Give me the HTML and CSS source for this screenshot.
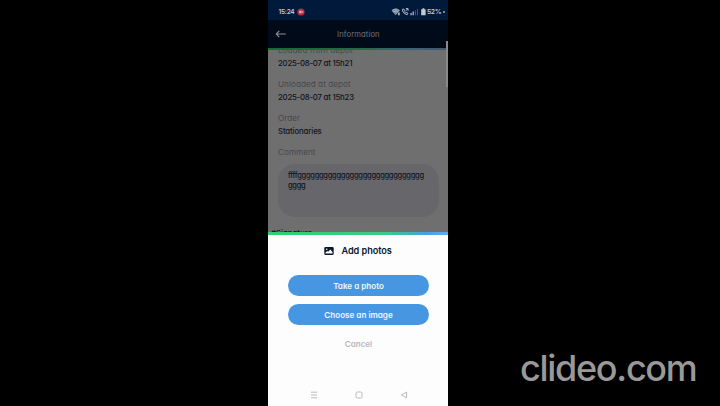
FILE: index.html
```html
<!DOCTYPE html>
<html lang="en">
<head>
<meta charset="utf-8">
<title>Information</title>
<link rel="stylesheet" href="styles.css">
</head>
<body>
<div class="phone">
  <div class="status">
    <span class="time">15:24</span>
    <svg class="rec" viewBox="0 0 8 8"><circle cx="4" cy="4" r="3.6" fill="#b82b42"/><path d="M2.2 2.7h2.5v2.6H2.2zM5 3.6l1.2-.7v2.2L5 4.5z" fill="#d9aab8"/></svg>
    <svg class="signals" viewBox="0 0 36 10">
      <path d="M.5 3.6Q4.7 0 8.9 3.6L4.7 8.2z" fill="#7f8ea1"/>
      <path d="M1 3.5q3.7-3.1 7.4 0M2.2 5q2.5-2 5 0" fill="none" stroke="#b4bdc8" stroke-width=".8"/>
      <path d="M7 5.6h1.8v2.6H7z" fill="#a5b0be"/>
      <g fill="none" stroke="#b4bdc8" stroke-width="1"><path d="M11.4 2.3c0 2.8 1.7 4.5 4.8 5.4l.8-1.4-1.5-.9-.9.6-1.5-1.6.6-.9-.8-1.4z"/><path d="M14.6 3.9l2.4-2.2M14.8 1.6h2.3v2"/></g>
      <path d="M19.4 6h1.4v2.2h-1.4zM21.5 4.6h1.4v3.6h-1.4z" fill="#a5b0be"/>
      <path d="M23.9 3.2h1v5h-1zM26 2h1v6.2h-1z" fill="#425571"/>
      <path d="M31.5 1.3h1.8v1h1.3v6h-4.4v-6h1.3z" fill="#c3cad3"/>
    </svg>
    <span class="percent">52%</span>
    <span class="dot"></span>
  </div>
  <div class="header">
    <svg class="back" viewBox="0 0 12 10"><path d="M10.8 5H1.2M4.3 1.8L1.2 5l3.1 3.2" fill="none" stroke="#8c8f96" stroke-width="1.1"/></svg>
    <span class="heading">Information</span>
  </div>
  <div class="rule rule-dim"></div>
  <div class="content">
    <div class="label l-load">Loaded from depot</div>
    <div class="value v-date">2025-08-07 at 15h21</div>
    <div class="label l-unload">Unloaded at depot</div>
    <div class="value v-date2">2025-08-07 at 15h23</div>
    <div class="label l-order">Order</div>
    <div class="value v-stat">Stationaries</div>
    <div class="label l-comment">Comment</div>
    <div class="comment">ffffggggggggggggggggggggggggggggg<br>gggg</div>
    <div class="value signed">#Signature</div>
  </div>
  <div class="scrollbar"></div>
  <div class="rule"></div>
  <div class="sheet">
    <div class="title">
      <svg class="photo" viewBox="0 0 10 8"><rect x=".3" y=".1" width="9.4" height="7.8" rx="1.1" fill="#0b1730"/><path d="M1.5 6.6V5.4L3.2 3.9l1 .9 2-2.2 2.3 2.5v1.5z" fill="#fff"/><circle cx="2.7" cy="2.2" r=".8" fill="#fff"/></svg>
      <span class="add">Add photos</span>
    </div>
    <div class="button take"><span>Take a photo</span></div>
    <div class="button choose"><span>Choose an image</span></div>
    <div class="cancel"><span>Cancel</span></div>
    <div class="nav">
      <svg viewBox="0 0 8 8"><path d="M1 1.2h6M1 4h6M1 6.8h6"/></svg>
      <svg viewBox="0 0 8 8"><rect x="1" y="1" width="6" height="6" rx="1.4"/></svg>
      <svg viewBox="0 0 8 8"><path d="M6.6 1.1v5.8L1.3 4z"/></svg>
    </div>
  </div>
</div>
<div class="watermark">clideo.com</div>
</body>
</html>
```
FILE: styles.css
```css
* { box-sizing: border-box; }
body {
  margin: 0;
  width: 720px;
  height: 406px;
  overflow: hidden;
  background: #000;
  font-family: Inter, "Liberation Sans", sans-serif;
  font-feature-settings: "cv11";
  font-size: 8px;
  line-height: 10px;
  white-space: nowrap;
}
svg { display: block; flex: none; }
.phone {
  position: relative;
  width: 180px;
  height: 406px;
  margin-left: 268px;
  display: flex;
  flex-direction: column;
}
.status {
  height: 20px;
  padding: 3px 3px 0 10.5px;
  display: flex;
  align-items: center;
  background: #011a3b;
  color: #c3cad3;
}
.time { width: 18.5px; font-size: 6.5px; font-weight: 600; letter-spacing: -.25px; }
.rec { width: 8px; height: 8px; }
.signals { width: 36px; height: 10px; margin-left: 86px; }
.percent { width: 16px; font-size: 6.8px; font-weight: 600; letter-spacing: -.4px; }
.dot { width: 2px; height: 2px; border-radius: 1px; background: #9fa7ad; }
.header {
  height: 28px;
  display: flex;
  align-items: center;
  background: #010a19;
}
.back { width: 12px; height: 10px; margin-left: 6.5px; }
.heading { margin: 1px 0 0 50.5px; font-size: 7.6px; color: #75777d; letter-spacing: .13px; }
.rule { flex: none; height: 3px; background: linear-gradient(90deg, #2bd36b 0%, #3acb86 65%, #4b9fdc 88%, #68a9e8 100%); }
.rule-dim { height: 2px; background: linear-gradient(90deg, #126c34 0%, #226a45 50%, #3e6078 80%, #42566a 100%); }
.content {
  height: 182px;
  padding: 0 9px 0 10px;
  overflow: hidden;
  background: #6f6f70;
}
.label { height: 10px; color: #47484c; font-size: 8.1px; letter-spacing: .07px; }
.value { height: 10px; color: #10131e; font-size: 7.8px; font-weight: 500; }
.l-load { margin-top: -5px; }
.v-date { margin-top: 3px; letter-spacing: -.22px; }
.l-unload { margin-top: 11px; }
.v-date2 { margin-top: 3px; letter-spacing: -.22px; }
.l-order { margin-top: 11px; }
.v-stat { margin-top: 3px; letter-spacing: -.12px; }
.l-comment { margin-top: 11px; }
.comment {
  height: 53px;
  margin-top: 7px;
  padding: 7px 10px;
  border-radius: 17px;
  background: #67676b;
  color: #10131e;
  font-size: 7.5px;
  font-weight: 500;
  letter-spacing: -.28px;
}
.signed { margin: 10.5px 0 0 -7px; }
.scrollbar { position: absolute; top: 41px; right: 0; width: 2px; height: 46px; background: #898989; }
.sheet {
  height: 171px;
  padding: 11px 19px 0 20px;
  background: #fdfdfd;
}
.title { height: 10px; padding-left: 36px; display: flex; align-items: center; color: #0b1730; }
.photo { width: 10px; height: 8px; }
.add { margin-left: 7.5px; font-size: 9.2px; font-weight: 600; letter-spacing: -.08px; }
.button {
  height: 21px;
  display: flex;
  align-items: center;
  justify-content: center;
  border-radius: 11px;
  background: #4796e2;
  color: #f1f7fd;
  font-weight: 600;
  font-size: 8.1px;
}
.take { margin-top: 19px; }
.choose { margin-top: 8px; }
.cancel { margin-top: 14px; text-align: center; color: #b8b8bb; font-weight: 600; font-size: 8px; }
.nav { margin: 42px 21px 0 22px; display: flex; justify-content: space-between; }
.nav svg { width: 8px; height: 8px; fill: none; stroke: #a9a9a9; stroke-width: .8; }
.watermark {
  position: absolute;
  left: 520px;
  top: 346px;
  font-size: 36px;
  font-weight: 500;
  line-height: 44px;
  letter-spacing: -1.3px;
  color: #999;
}
```
